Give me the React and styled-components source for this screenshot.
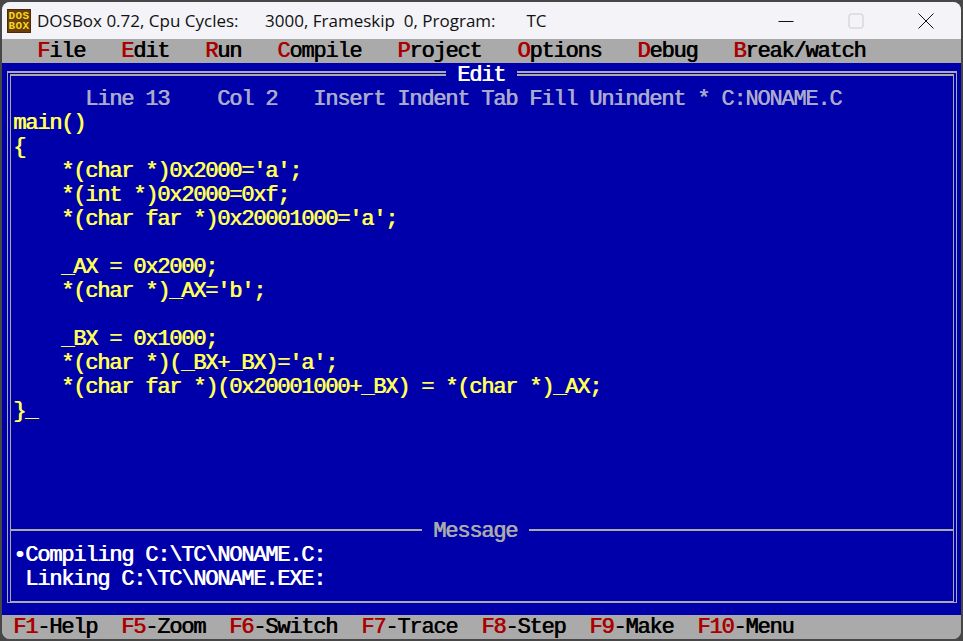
import React from 'react';
import styled, { createGlobalStyle } from 'styled-components';

const Global = createGlobalStyle`
  html, body { margin: 0; padding: 0; background: #474747; }
  #root { width: 963px; height: 641px; overflow: hidden; }
`;
const Desk = styled.div`
  width: 963px; height: 641px; padding: 2px; box-sizing: border-box; background: #474747;
`;
const Win = styled.div`
  width: 959px; height: 637px; border-radius: 8px;
  display: flex; flex-direction: column; background: #aaa;
`;
const TitleBar = styled.div`
  height: 37px; flex: none; background: #f3f3f8; display: flex; align-items: center; border-radius: 8px 8px 0 0;
`;
const AppIcon = styled.div`
  width: 24px; height: 24px; margin-left: 5px; margin-top: 1px; background: #6b3f0c; border: 1px solid #4a2a08; box-sizing: border-box;
  color: #f4d81c; font: bold 11px/10px "Liberation Mono", monospace; text-align: center; padding-top: 1px; letter-spacing: 0.4px;
  white-space: pre; flex: none;
`;
const Title = styled.div`
  margin-left: 6px; font: 17px "Open Sans", sans-serif; color: #111; white-space: pre; flex: 1;
`;
const CtlBtn = styled.div`
  width: 70px; height: 37px; display: flex; align-items: center; justify-content: center; flex: none;
`;
const Cell = styled.div`
  font-family: "Liberation Mono", monospace; font-weight: normal; font-size: 22px; letter-spacing: -1.2px;
  text-shadow: 0.7px 0 0 currentColor; text-indent: -1px;
  line-height: 20px; height: 24px; box-sizing: border-box; padding-top: 4px; white-space: pre; color: ${p => p.$c || '#000'};
`;
const Hot = styled.span`color: #aa0000;`;
const Bar = styled(Cell)`
  flex: none; background: #aaa; padding-top: 3px; padding-left: ${p => p.$pad}px; border-radius: ${p => p.$round ? '0 0 8px 8px' : '0'};
`;
const Blue = styled.div`
  flex: 1; background: #0000aa; padding: 8px 4px 0 5px; display: flex; flex-direction: column; min-height: 0;
`;
const EditorPane = styled.div`
  position: relative; height: 447px; flex: none; box-sizing: border-box;
  border-style: double; border-color: #aaa; border-width: 5px 4px 0; padding: 10px 0 0 3px;
`;
const PaneTitle = styled(Cell)`
  position: absolute; top: -10px; left: 435px; height: 20px; padding-top: 0; background: #0000aa; color: #fff;
`;
const MsgPane = styled.div`
  height: 85px; flex: none; box-sizing: border-box; border-style: double; border-color: #aaa; border-width: 0 4px;
  border-bottom: 2px solid #aaa; padding-left: 3px;
`;
const MsgHead = styled.div`
  display: flex; align-items: center; height: 24px; margin-left: -3px;
`;
const Rule = styled.div`
  height: 2px; background: #aaa; flex: ${p => p.$grow ? 1 : 'none'}; width: ${p => p.$w || 0}px;
`;

const Min = () => <svg width="16" height="16" viewBox="0 0 16 16"><path d="M0.5 8.5H15.5" stroke="#111" fill="none"/></svg>;
const Max = () => <svg width="16" height="16" viewBox="0 0 16 16"><rect x="1" y="1" width="14" height="14" rx="2" stroke="#cdcdd0" strokeWidth="1" fill="none"/></svg>;
const Close = () => <svg width="16" height="16" viewBox="0 0 16 16"><path d="M0.5 0.5L15.5 15.5M15.5 0.5L0.5 15.5" stroke="#111" fill="none"/></svg>;

const code = [
  'main()', '{',
  "    *(char *)0x2000='a';",
  '    *(int *)0x2000=0xf;',
  "    *(char far *)0x20001000='a';",
  '',
  '    _AX = 0x2000;',
  "    *(char *)_AX='b';",
  '',
  '    _BX = 0x1000;',
  "    *(char *)(_BX+_BX)='a';",
  '    *(char far *)(0x20001000+_BX) = *(char *)_AX;',
  '}_',
];

const menu = [['F','ile'],['E','dit'],['R','un'],['C','ompile'],['P','roject'],['O','ptions'],['D','ebug'],['B','reak/watch']];
const keys = [['F1','-Help','  '],['F5','-Zoom','  '],['F6','-Switch','  '],['F7','-Trace','  '],['F8','-Step','  '],['F9','-Make','  '],['F10','-Menu','']];

export default function App() {
  return (
    <Desk>
      <Global />
      <Win>
        <TitleBar>
          <AppIcon>{'DOS\nBOX'}</AppIcon>
          <Title>{'DOSBox 0.72, Cpu Cycles:      3000, Frameskip  0, Program:       TC'}</Title>
          <CtlBtn><Min /></CtlBtn>
          <CtlBtn><Max /></CtlBtn>
          <CtlBtn><Close /></CtlBtn>
        </TitleBar>
        <Bar $pad={36}>
          {menu.map(([h, r]) => <React.Fragment key={h}><Hot>{h}</Hot>{r}{'   '}</React.Fragment>)}
        </Bar>
        <Blue>
          <EditorPane>
            <PaneTitle>{' Edit '}</PaneTitle>
            <Cell $c="#aaaacc">{'      Line 13    Col 2   Insert Indent Tab Fill Unindent * C:NONAME.C'}</Cell>
            {code.map((l, i) => <Cell key={i} $c="#ffff55">{l}</Cell>)}
          </EditorPane>
          <MsgPane>
            <MsgHead>
              <Rule $w={411} />
              <Cell $c="#aaa">{' Message '}</Cell>
              <Rule $grow />
            </MsgHead>
            <Cell $c="#fff">{'•Compiling C:\\TC\\NONAME.C:'}</Cell>
            <Cell $c="#fff">{' Linking C:\\TC\\NONAME.EXE:'}</Cell>
          </MsgPane>
        </Blue>
        <Bar $pad={12} $round>
          {keys.map(([k, r, g]) => <React.Fragment key={k}><Hot>{k}</Hot>{r}{g}</React.Fragment>)}
        </Bar>
      </Win>
    </Desk>
  );
}
